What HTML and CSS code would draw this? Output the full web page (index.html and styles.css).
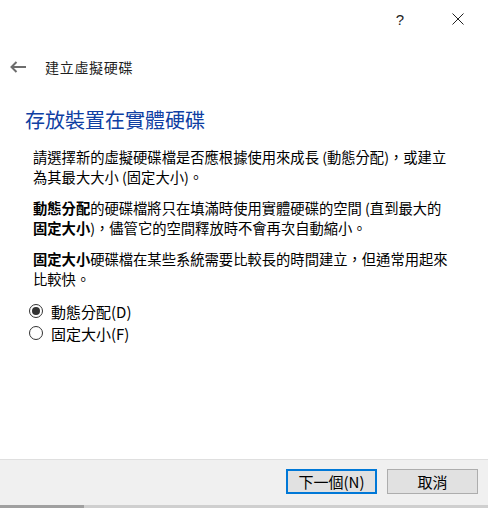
FILE: index.html
```html
<!DOCTYPE html>
<html lang="zh-Hant">
<head>
    <meta charset="UTF-8">
    <meta name="viewport" content="width=device-width, initial-scale=1.0">
    <title>建立虛擬硬碟</title>
    <link rel="stylesheet" href="styles.css">
</head>
<body>
    <div class="window">
        <div class="titlebar">
            <div class="title-btn help">?</div>
            <div class="title-btn close">
                <svg width="12" height="12" viewBox="0 0 12 12">
                    <path d="M0.5 0.5 L11.5 11.5 M11.5 0.5 L0.5 11.5" stroke="#222" stroke-width="1" fill="none"/>
                </svg>
            </div>
        </div>

        <div class="nav">
            <div class="back">
                <svg width="16" height="12" viewBox="0 0 16 12">
                    <path d="M1.5 6 H16 M6.5 1 L1.5 6 L6.5 11" stroke="#6d6d6d" stroke-width="2" fill="none"/>
                </svg>
            </div>
            <span class="nav-title">建立虛擬硬碟</span>
        </div>

        <div class="main">
            <h1 class="heading">存放裝置在實體硬碟</h1>
            <div class="body">
                <p>請選擇新的虛擬硬碟檔是否應根據使用來成長 (動態分配)，或建立<br>為其最大大小 (固定大小)。</p>
                <p><b>動態分配</b>的硬碟檔將只在填滿時使用實體硬碟的空間 (直到最大的<br><b>固定大小</b>)，儘管它的空間釋放時不會再次自動縮小。</p>
                <p><b>固定大小</b>硬碟檔在某些系統需要比較長的時間建立，但通常用起來<br>比較快。</p>
                <div class="options">
                    <label class="option">
                        <input type="radio" name="kind" checked>
                        <span>動態分配(D)</span>
                    </label>
                    <label class="option">
                        <input type="radio" name="kind">
                        <span>固定大小(F)</span>
                    </label>
                </div>
            </div>
        </div>

        <div class="footer">
            <div class="buttons">
                <button class="btn default">下一個(N)</button>
                <button class="btn">取消</button>
            </div>
            <div class="edge">
                <div class="edge-thumb"></div>
            </div>
        </div>
    </div>
</body>
</html>
```

FILE: styles.css
```css
body {
    margin: 0;
    padding: 0;
    background-color: #fff;
    color: #000;
    font-family: "Noto Sans CJK TC", "Microsoft JhengHei", sans-serif;
}

.window {
    width: 488px;
    height: 508px;
    display: flex;
    flex-direction: column;
    overflow: hidden;
}

.titlebar {
    height: 38px;
    display: flex;
    justify-content: flex-end;
    align-items: center;
    padding-right: 7px;
}

.title-btn {
    width: 46px;
    height: 38px;
    display: flex;
    justify-content: center;
    align-items: center;
    margin-left: 12px;
}

.help {
    font-family: "Liberation Sans", Arial, sans-serif;
    font-size: 15px;
    color: #222;
}

.nav {
    height: 30px;
    margin-top: 14px;
    display: flex;
    align-items: center;
    padding-left: 10px;
}

.back {
    width: 16px;
    display: flex;
    align-items: center;
    margin-right: 19px;
}

.nav-title {
    font-size: 14px;
    letter-spacing: 0.7px;
    color: #1e1e1e;
    line-height: 20px;
}

.main {
    flex: 1;
}

.heading {
    margin: 24px 0 0 25px;
    font-size: 20px;
    font-weight: normal;
    line-height: 28px;
    color: #0f3fa3;
}

.body {
    padding-left: 33px;
    margin-top: 13px;
}

.body p {
    margin: 0 0 11px 0;
    font-size: 14.3px;
    line-height: 20px;
    white-space: nowrap;
}

.body p b {
    font-weight: bold;
}

.options {
    margin-top: 10px;
    margin-left: -4px;
}

.option {
    display: flex;
    align-items: center;
    height: 22px;
    font-size: 15px;
}

.option input {
    appearance: none;
    -webkit-appearance: none;
    flex-shrink: 0;
    width: 14px;
    height: 14px;
    margin: 0 8px 0 0;
    border: 1px solid #333;
    border-radius: 50%;
    background: #fff;
    display: flex;
    justify-content: center;
    align-items: center;
    box-sizing: border-box;
}

.option input:checked::after {
    content: "";
    width: 8px;
    height: 8px;
    border-radius: 50%;
    background: #333;
}

.footer {
    background-color: #f0f0f0;
    border-top: 1px solid #dfdfdf;
}

.buttons {
    display: flex;
    justify-content: flex-end;
    gap: 10px;
    padding: 9px 10px 10px;
}

.btn {
    width: 91px;
    height: 25px;
    background-color: #e1e1e1;
    border: 1px solid #adadad;
    font-family: inherit;
    font-size: 15px;
    color: #000;
    padding: 0;
    display: flex;
    justify-content: center;
    align-items: center;
}

.btn.default {
    border: 2px solid #0078d7;
}

.edge {
    height: 3px;
    margin-top: 1px;
    background-color: #cfcfcf;
}

.edge-thumb {
    width: 84px;
    height: 3px;
    background-color: #a0a0a0;
}
```
